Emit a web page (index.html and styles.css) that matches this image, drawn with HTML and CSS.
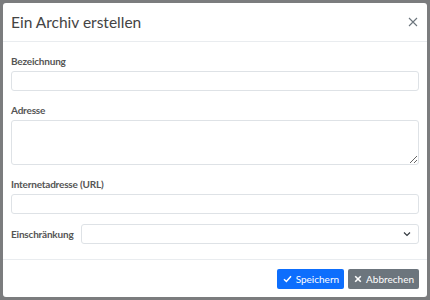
FILE: index.html
```html
<!DOCTYPE html>
<html lang="de">
<head>
    <meta charset="UTF-8">
    <title>Ein Archiv erstellen</title>
    <link rel="stylesheet" href="styles.css">
</head>
<body>
    <div class="backdrop">
        <div class="modal">
            <div class="modal-header">
                <h5 class="modal-title">Ein Archiv erstellen</h5>
                <button class="btn-close" aria-label="Schließen">
                    <svg width="10" height="10" viewBox="0 0 10 10"><path d="M1 1L9 9M9 1L1 9" stroke="#6c757d" stroke-width="1.1" fill="none"/></svg>
                </button>
            </div>
            <form class="modal-body">
                <div class="field">
                    <label for="name">Bezeichnung</label>
                    <input type="text" id="name" class="form-control">
                </div>
                <div class="field">
                    <label for="address">Adresse</label>
                    <textarea id="address" class="form-control textarea"></textarea>
                </div>
                <div class="field">
                    <label for="url">Internetadresse (URL)</label>
                    <input type="text" id="url" class="form-control">
                </div>
                <div class="field-row">
                    <label for="restriction">Einschränkung</label>
                    <div class="select" id="restriction">
                        <svg width="8" height="6" viewBox="0 0 8 6"><path d="M1 1.5L4 4.5L7 1.5" stroke="#343a40" stroke-width="1.2" fill="none"/></svg>
                    </div>
                </div>
            </form>
            <div class="modal-footer">
                <button class="btn btn-primary">
                    <svg width="9" height="8" viewBox="0 0 9 8"><path d="M1 4.2L3.4 6.5L8 1.2" stroke="#fff" stroke-width="1.5" fill="none"/></svg>
                    Speichern
                </button>
                <button class="btn btn-secondary">
                    <svg width="8" height="8" viewBox="0 0 8 8"><path d="M1.2 1.2L6.8 6.8M6.8 1.2L1.2 6.8" stroke="#fff" stroke-width="1.6" fill="none"/></svg>
                    Abbrechen
                </button>
            </div>
        </div>
    </div>
</body>
</html>
```

FILE: styles.css
```css
body {
    margin: 0;
    font-family: Lato, "Open Sans", sans-serif;
    background: #7b7c7e;
}
.backdrop {
    height: 300px;
    padding: 3px;
    box-sizing: border-box;
}
.modal {
    height: 294px;
    background-color: #fff;
    border-radius: 3px;
    display: flex;
    flex-direction: column;
}
.modal-header {
    height: 38px;
    padding: 0 8px;
    display: flex;
    align-items: center;
    justify-content: space-between;
    border-bottom: 1px solid #e9ecef;
}
.modal-title {
    margin: 0;
    font-size: 15.5px;
    font-weight: 400;
    color: #444;
}
.btn-close {
    border: none;
    background: none;
    padding: 0;
    margin-right: 1px;
    display: flex;
}
.modal-body {
    flex: 1;
    padding: 11px 8px 0 8px;
}
.field {
    margin-bottom: 11px;
}
.field label,
.field-row label {
    display: block;
    font-size: 10px;
    line-height: 16px;
    font-weight: 700;
    letter-spacing: -0.2px;
    color: #555;
    margin-bottom: 2px;
}
.form-control {
    display: block;
    width: 100%;
    height: 20px;
    box-sizing: border-box;
    border: 1px solid #dee2e6;
    border-radius: 3px;
    margin: 0;
    padding: 0;
    background: #fff;
}
.textarea {
    height: 45px;
    resize: vertical;
}
.field-row {
    display: grid;
    grid-template-columns: 70px 1fr;
    align-items: center;
    margin-top: -1px;
}
.field-row label {
    margin: 0;
}
.select {
    height: 20px;
    box-sizing: border-box;
    border: 1px solid #dee2e6;
    border-radius: 3px;
    display: flex;
    align-items: center;
    justify-content: flex-end;
    padding-right: 7px;
}
.modal-footer {
    height: 37px;
    border-top: 1px solid #e9ecef;
    display: flex;
    align-items: center;
    justify-content: flex-end;
    gap: 4px;
    padding: 0 8px;
}
.btn {
    height: 20px;
    border: none;
    border-radius: 2px;
    font-family: inherit;
    font-size: 10px;
    color: #fff;
    padding: 0 5px 0 6px;
    display: flex;
    align-items: center;
    gap: 4px;
}
.btn-primary {
    background-color: #0d6efd;
}
.btn-secondary {
    background-color: #6c757d;
}
```
